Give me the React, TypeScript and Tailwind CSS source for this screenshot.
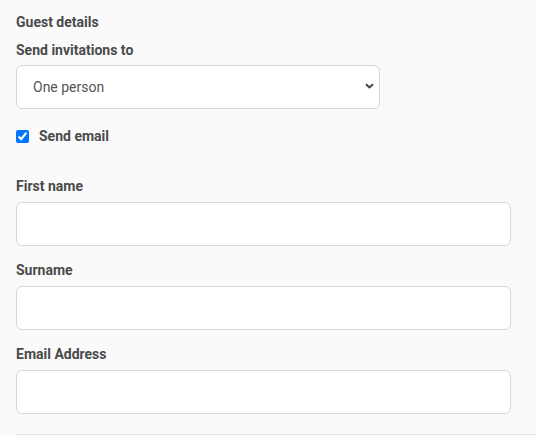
export default function App() {
  const fields = ['First name', 'Surname', 'Email Address'];

  return (
    <div className="min-h-screen bg-[#fafafa] font-['Roboto',sans-serif] text-[#4a4a4a]">
      <div className="pl-4 pt-[14px]">
        <h2 className="text-[14px] leading-4 font-bold">Guest details</h2>

        <label className="mt-3 block text-[14px] leading-4 font-bold">Send invitations to</label>
        <div className="relative mt-[7px] w-[364px]">
          <select className="h-[44px] w-full appearance-none rounded-[6px] border border-[#d6d6d6] bg-white pl-[16px] text-[14px] text-[#555] outline-none">
            <option>One person</option>
            <option>Two people</option>
          </select>
          <svg
            className="pointer-events-none absolute right-[6px] top-[18px]"
            width="9"
            height="6"
            viewBox="0 0 9 6"
          >
            <path d="M1 1.2 L4.5 4.5 L8 1.2" fill="none" stroke="#444" strokeWidth="2" />
          </svg>
        </div>

        <label className="mt-[19px] flex items-center gap-[10px] text-[14px] leading-4 font-bold">
          <input type="checkbox" defaultChecked className="m-0 h-[13px] w-[13px] accent-[#0075ff]" />
          Send email
        </label>

        {fields.map((f, i) => (
          <div key={f} className={i === 0 ? 'mt-[34px]' : 'mt-4'}>
            <label className="block text-[14px] leading-4 font-bold">{f}</label>
            <input
              type="text"
              className="mt-2 block h-[44px] w-[495px] rounded-[6px] border border-[#d6d6d6] bg-white px-3 text-[14px] outline-none"
            />
          </div>
        ))}

        <div className="mt-5 border-t border-[#e6e6e6]" />
      </div>
    </div>
  );
}
